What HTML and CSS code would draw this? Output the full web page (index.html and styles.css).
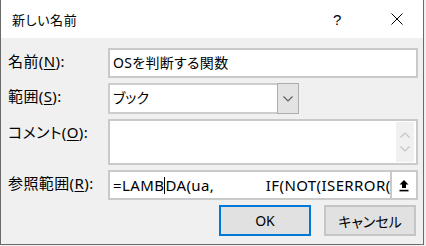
FILE: index.html
```html
<!DOCTYPE html>
<html lang="ja">
<head>
<meta charset="utf-8">
<link rel="stylesheet" href="styles.css">
</head>
<body>
<div class="window">
  <div class="titlebar">
    <span class="title">新しい名前</span>
    <span class="help">?</span>
    <span class="close">
      <svg width="12" height="12" viewBox="0 0 12 12"><path d="M0.5 0.5 L11.5 11.5 M11.5 0.5 L0.5 11.5" stroke="#000" stroke-width="1" fill="none"/></svg>
    </span>
  </div>
  <div class="content">
    <div class="row">
      <label class="lbl">名前(<u>N</u>):</label>
      <div class="field text">OSを判断する関数</div>
    </div>
    <div class="row">
      <label class="lbl">範囲(<u>S</u>):</label>
      <div class="field select">
        <span class="sel-text">ブック</span>
        <span class="sel-btn">
          <svg width="10" height="6" viewBox="0 0 10 6"><path d="M0.5 0.5 L5 5 L9.5 0.5" stroke="#5a5a5a" stroke-width="1.1" fill="none"/></svg>
        </span>
      </div>
    </div>
    <div class="row">
      <label class="lbl">コメント(<u>O</u>):</label>
      <div class="field memo">
        <div class="memo-area"></div>
        <div class="scroll">
          <svg width="10" height="6" viewBox="0 0 10 6"><path d="M0.5 5.5 L5 1 L9.5 5.5" stroke="#c4c4c4" stroke-width="1.2" fill="none"/></svg>
          <svg width="10" height="6" viewBox="0 0 10 6"><path d="M0.5 0.5 L5 5 L9.5 0.5" stroke="#c4c4c4" stroke-width="1.2" fill="none"/></svg>
        </div>
      </div>
    </div>
    <div class="row">
      <label class="lbl">参照範囲(<u>R</u>):</label>
      <div class="ref">
        <div class="field reftext"><span class="formula">=LAMB<span class="caret"></span>DA(ua,            IF(NOT(ISERROR(</span></div>
        <div class="refbtn">
          <svg width="12" height="13" viewBox="0 0 12 13"><path d="M6 1 L10.5 5.5 L8 5.5 L8 9 L4 9 L4 5.5 L1.5 5.5 Z" fill="#000"/><rect x="1.5" y="10.8" width="9" height="1.6" fill="#000"/></svg>
        </div>
      </div>
    </div>
    <div class="buttons">
      <button class="btn ok">OK</button>
      <button class="btn">キャンセル</button>
    </div>
  </div>
  <div class="grip">
    <svg width="10" height="10" viewBox="0 0 10 10"><path d="M9 3 L3 9 M9 6 L6 9" stroke="#9a9a9a" stroke-width="1" fill="none"/></svg>
  </div>
</div>
</body>
</html>
```
FILE: styles.css
```css
html, body {
  margin: 0;
  padding: 0;
  background: #f0f0f0;
}
body {
  font-family: "Noto Sans", "Noto Sans CJK JP", sans-serif;
  font-feature-settings: "palt";
  color: #000;
}
.window {
  position: relative;
  width: 422px;
  height: 244px;
  border-left: 1px solid #6a6a6a;
  border-right: 1px solid #6a6a6a;
  border-bottom: 1px solid #6a6a6a;
  background: #f0f0f0;
  display: flex;
  flex-direction: column;
}
.titlebar {
  height: 38px;
  background: #fff;
  display: flex;
  align-items: center;
  padding-left: 11px;
  flex: none;
}
.title {
  font-size: 13px;
  letter-spacing: 0.6px;
  flex: 1;
}
.help {
  font-size: 15px;
  width: 58px;
  text-align: left;
  font-family: "Liberation Sans", sans-serif;
}
.close {
  width: 32px;
  display: flex;
  align-items: center;
}
.content {
  padding: 10px 5px 0 7px;
  display: flex;
  flex-direction: column;
  gap: 5px;
}
.row {
  display: flex;
  align-items: flex-start;
}
.lbl {
  width: 100px;
  font-size: 15px;
  letter-spacing: 0.4px;
  line-height: 20px;
  padding-top: 3px;
  flex: none;
}
.lbl u {
  text-decoration-thickness: 1px;
  text-underline-offset: 2px;
}
.field {
  box-sizing: border-box;
  border: 2px solid #c9c9c9;
  background: #fff;
  font-size: 14px;
}
.text {
  width: 310px;
  height: 30px;
  line-height: 26px;
  padding-left: 3px;
  letter-spacing: 0.3px;
}
.select {
  width: 191px;
  height: 31px;
  display: flex;
  border-color: #cdcdcd;
}
.sel-text {
  flex: 1;
  line-height: 26px;
  padding-left: 3px;
}
.sel-btn {
  width: 20px;
  background: #e3e3e3;
  border: 1px solid #adadad;
  margin: -2px -2px -2px 0;
  display: flex;
  align-items: center;
  justify-content: center;
}
.memo {
  width: 310px;
  height: 46px;
  display: flex;
}
.memo-area {
  flex: 1;
}
.scroll {
  width: 18px;
  margin: 1px 2px 1px 0;
  background: #f0f0f0;
  display: flex;
  flex-direction: column;
  align-items: center;
  justify-content: space-around;
  padding: 6px 0;
}
.ref {
  width: 310px;
  height: 30px;
  display: flex;
}
.reftext {
  flex: 1;
  height: 30px;
  overflow: hidden;
  white-space: pre;
  line-height: 26px;
  padding-left: 3px;
  border-right-width: 1px;
  font-size: 15px;
  letter-spacing: 0.4px;
}
.formula {
  white-space: pre;
}
.caret {
  display: inline-block;
  width: 1px;
  height: 17px;
  background: #000;
  vertical-align: -3px;
}
.refbtn {
  box-sizing: border-box;
  width: 27px;
  height: 30px;
  background: #fff;
  border: 2px solid #c9c9c9;
  border-left-width: 1px;
  display: flex;
  align-items: center;
  justify-content: center;
}
.buttons {
  display: flex;
  justify-content: flex-end;
  gap: 13px;
  padding-right: 2px;
}
.btn {
  box-sizing: border-box;
  width: 92px;
  height: 31px;
  background: #e1e1e1;
  border: 2px solid #c5c5c5;
  font-family: "Noto Sans", "Noto Sans CJK JP", sans-serif;
  font-feature-settings: "palt";
  font-size: 14px;
  color: #000;
  padding: 0;
  margin: 0;
}
.btn.ok {
  border-color: #0078d7;
}
.grip {
  position: absolute;
  right: 0;
  bottom: 0;
  width: 10px;
  height: 10px;
}
```
